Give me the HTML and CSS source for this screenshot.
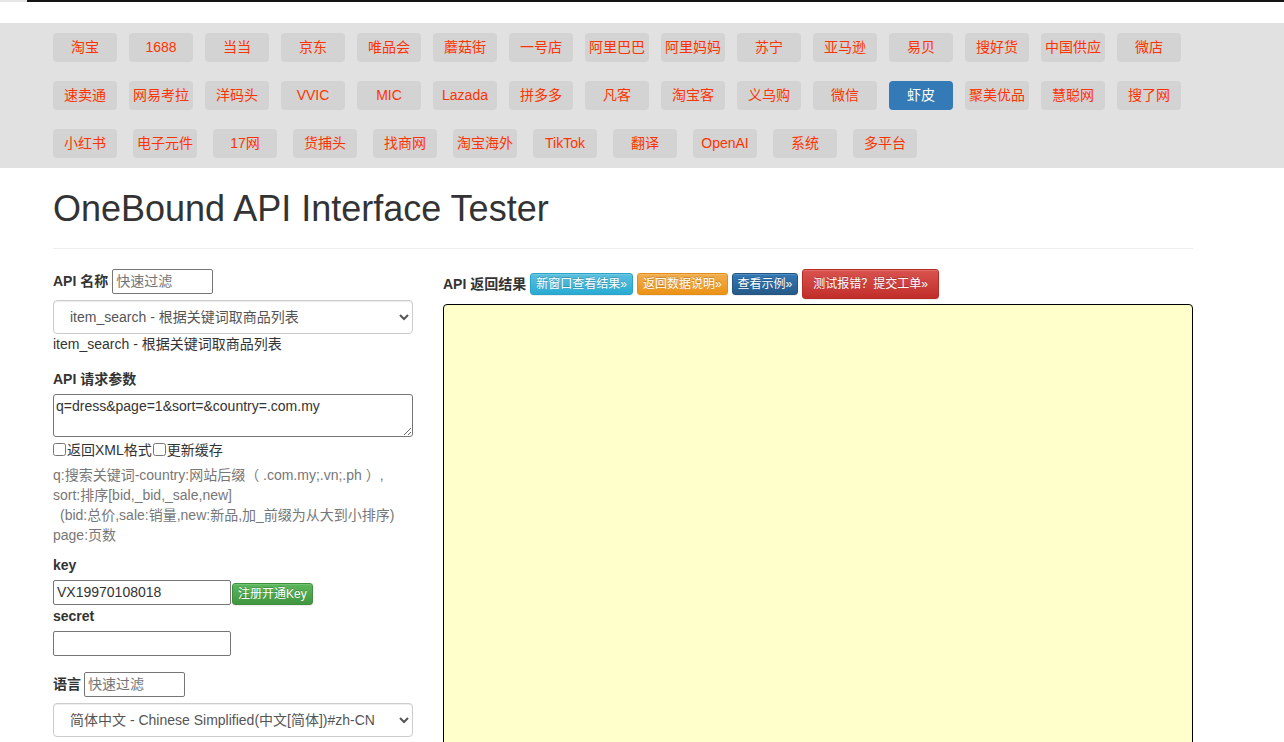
FILE: index.html
```html
<!DOCTYPE html>
<html lang="zh-CN">
<head>
<meta charset="utf-8">
<title>OneBound API Interface Tester</title>
<link rel="stylesheet" href="styles.css">
</head>
<body>
<div class="topline"><div class="topline-bar"></div></div>
<nav class="band">
  <div class="container">
    <div class="tag-row">
      <a class="tag">淘宝</a><a class="tag">1688</a><a class="tag">当当</a><a class="tag">京东</a><a class="tag">唯品会</a><a class="tag">蘑菇街</a><a class="tag">一号店</a><a class="tag">阿里巴巴</a><a class="tag">阿里妈妈</a><a class="tag">苏宁</a><a class="tag">亚马逊</a><a class="tag">易贝</a><a class="tag">搜好货</a><a class="tag">中国供应</a><a class="tag">微店</a>
    </div>
    <div class="tag-row">
      <a class="tag">速卖通</a><a class="tag">网易考拉</a><a class="tag">洋码头</a><a class="tag">VVIC</a><a class="tag">MIC</a><a class="tag">Lazada</a><a class="tag">拼多多</a><a class="tag">凡客</a><a class="tag">淘宝客</a><a class="tag">义乌购</a><a class="tag">微信</a><a class="tag active">虾皮</a><a class="tag">聚美优品</a><a class="tag">慧聪网</a><a class="tag">搜了网</a>
    </div>
    <div class="tag-row wide">
      <a class="tag">小红书</a><a class="tag">电子元件</a><a class="tag">17网</a><a class="tag">货捕头</a><a class="tag">找商网</a><a class="tag">淘宝海外</a><a class="tag">TikTok</a><a class="tag">翻译</a><a class="tag">OpenAI</a><a class="tag">系统</a><a class="tag">多平台</a>
    </div>
  </div>
</nav>

<div class="container">
  <div class="page-header"><h1>OneBound API Interface Tester</h1></div>

  <div class="row">
    <div class="col-left">
      <div class="inline-field">
        <label class="lbl">API 名称</label>
        <input class="filter" type="text" placeholder="快速过滤">
      </div>
      <select class="form-control sel-api">
        <option>item_search - 根据关键词取商品列表</option>
      </select>
      <div class="desc">item_search - 根据关键词取商品列表</div>

      <label class="lbl block params-lbl">API 请求参数</label>
      <textarea class="params">q=dress&amp;page=1&amp;sort=&amp;country=.com.my</textarea>
      <div class="checks">
        <label><input type="checkbox">返回XML格式</label>
        <label><input type="checkbox">更新缓存</label>
      </div>
      <div class="help">
        q:搜索关键词-country:网站后缀（ .com.my;.vn;.ph ）,<br>
        sort:排序[bid,_bid,_sale,new]<br>
        <span class="indent">(bid:总价,sale:销量,new:新品,加_前缀为从大到小排序)</span><br>
        page:页数
      </div>

      <label class="lbl block key-lbl">key</label>
      <div class="key-row">
        <input class="key-input" type="text" value="VX19970108018">
        <button class="btn btn-xs btn-success">注册开通Key</button>
      </div>
      <label class="lbl block secret-lbl">secret</label>
      <input class="key-input secret-input" type="text">

      <div class="inline-field lang-field">
        <label class="lbl">语言</label>
        <input class="filter" type="text" placeholder="快速过滤">
      </div>
      <select class="form-control sel-lang">
        <option>简体中文 - Chinese Simplified(中文[简体])#zh-CN</option>
      </select>
    </div>

    <div class="col-right">
      <div class="result-head">
        <span class="lbl">API 返回结果</span>
        <a class="btn btn-xs btn-info">新窗口查看结果»</a>
        <a class="btn btn-xs btn-warning">返回数据说明»</a>
        <a class="btn btn-xs btn-primary">查看示例»</a>
        <a class="btn btn-sm btn-danger">测试报错？提交工单»</a>
      </div>
      <div class="result-box"></div>
    </div>
  </div>
</div>
</body>
</html>
```

FILE: styles.css
```css
* { box-sizing: border-box; }

html, body {
  margin: 0;
  padding: 0;
  background: #fff;
}

body {
  font-family: "Liberation Sans", "Noto Sans CJK SC", sans-serif;
  font-size: 14px;
  line-height: 20px;
  color: #333;
  overflow: hidden;
  height: 742px;
}

.topline {
  height: 23px;
  display: flex;
  align-items: flex-start;
  background: #fff;
}
.topline::before {
  content: "";
  width: 27px;
  height: 2px;
  background: #e6e6e6;
}
.topline-bar {
  flex: 1;
  height: 2px;
  background: #151313;
}

.container {
  width: 1170px;
  margin-left: 38px;
  padding: 0 15px;
}

.band {
  background: #e1e1e1;
  padding: 10px 0 10px;
}

.tag-row {
  display: flex;
  gap: 12px;
  margin-bottom: 19px;
}
.tag-row:last-child { margin-bottom: 0; }
.tag-row.wide { gap: 16px; }

.tag {
  display: block;
  width: 64px;
  height: 29px;
  line-height: 29px;
  text-align: center;
  background: #d3d3d3;
  color: #ff3300;
  border-radius: 4px;
  font-size: 14px;
  white-space: nowrap;
  text-decoration: none;
}
.tag.active {
  background: #337ab7;
  color: #fff;
}

.page-header {
  margin: 0 0 20px;
  padding-bottom: 9px;
  border-bottom: 1px solid #eee;
}
.page-header h1 {
  margin: 21px 0 10px;
  font-size: 36px;
  line-height: 39.6px;
  font-weight: 400;
  color: #333;
}

.row {
  display: flex;
  gap: 30px;
}
.col-left {
  width: 360px;
  flex: none;
}
.col-right {
  flex: 1;
}

.lbl {
  font-weight: 700;
  color: #333;
}
.block { display: block; }

.inline-field {
  display: flex;
  align-items: center;
  height: 25px;
}
.inline-field .lbl { margin-right: 4px; }
.lang-field .lbl { margin-right: 3px; }

.filter {
  width: 101px;
  height: 25px;
  border: 1px solid #767676;
  border-radius: 2px;
  padding: 1px 3px;
  font: 14px "Liberation Sans", "Noto Sans CJK SC", sans-serif;
  color: #333;
}
.filter::placeholder { color: #757575; }

.form-control {
  display: block;
  width: 360px;
  height: 34px;
  padding: 6px 12px;
  font: 14px "Liberation Sans", "Noto Sans CJK SC", sans-serif;
  color: #555;
  background: #fff;
  border: 1px solid #ccc;
  border-radius: 4px;
  box-shadow: inset 0 1px 1px rgba(0,0,0,.075);
}
.sel-api { margin-top: 6px; }
.sel-lang { margin-top: 6px; }

.desc { line-height: 20px; color: #333; }

.params-lbl { margin-top: 15px; margin-bottom: 5px; }

.params {
  display: block;
  width: 360px;
  height: 43px;
  border: 1px solid #767676;
  border-radius: 3px;
  padding: 3px 2px;
  font: 14px "Liberation Sans", "Noto Sans CJK SC", sans-serif;
  color: #333;
  resize: vertical;
}

.checks {
  margin-top: 3px;
  line-height: 20px;
  display: flex;
  gap: 1px;
}
.checks label {
  display: flex;
  align-items: center;
}
.checks input {
  margin: 0 1px 0 0;
  width: 13px;
  height: 13px;
}

.help {
  margin-top: 5px;
  color: #777;
  line-height: 20px;
}
.indent { padding-left: 7px; }

.key-lbl { margin-top: 10px; }

.key-row {
  margin-top: 5px;
  display: flex;
  align-items: flex-end;
  gap: 1px;
}
.key-input {
  display: block;
  width: 178px;
  height: 25px;
  border: 1px solid #767676;
  border-radius: 2px;
  padding: 1px 3px;
  font: 14px "Liberation Sans", "Noto Sans CJK SC", sans-serif;
  color: #333;
}
.secret-lbl { margin-top: 1px; }
.secret-input { margin-top: 5px; }

.lang-field { margin-top: 16px; }

.btn {
  display: inline-block;
  border: 1px solid transparent;
  color: #fff;
  text-align: center;
  white-space: nowrap;
  font-family: "Liberation Sans", "Noto Sans CJK SC", sans-serif;
  text-shadow: 0 -1px 0 rgba(0,0,0,.2);
  box-shadow: inset 0 1px 0 rgba(255,255,255,.15), 0 1px 1px rgba(0,0,0,.075);
  cursor: pointer;
  text-decoration: none;
}
.btn-xs {
  font-size: 12px;
  line-height: 18px;
  padding: 1px 5px;
  border-radius: 3px;
}
.btn-sm {
  font-size: 12px;
  line-height: 18px;
  padding: 5px 10px;
  border-radius: 3px;
}

.btn-info {
  background: linear-gradient(#5bc0de, #2aabd2);
  border-color: #28a4c9;
}
.btn-warning {
  background: linear-gradient(#f0ad4e, #eb9316);
  border-color: #e38d13;
}
.btn-primary {
  background: linear-gradient(#337ab7, #265a88);
  border-color: #245580;
}
.btn-danger {
  background: linear-gradient(#d9534f, #c12e2a);
  border-color: #b92c28;
}
.btn-success {
  background: linear-gradient(#5cb85c, #419641);
  border-color: #3e8f3e;
}

.result-head {
  display: flex;
  align-items: center;
  gap: 4px;
  height: 30px;
}

.result-box {
  margin-top: 5px;
  height: 600px;
  background: #ffffcc;
  border: 1px solid #000;
  border-radius: 4px;
}
```
